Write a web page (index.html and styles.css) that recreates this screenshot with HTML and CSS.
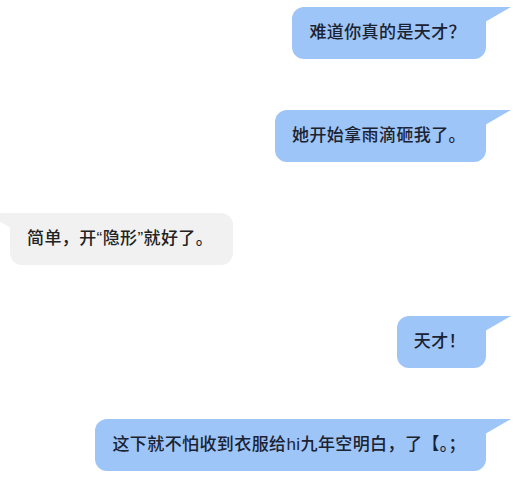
FILE: index.html
```html
<!DOCTYPE html>
<html lang="zh-CN">
<head>
<meta charset="utf-8">
<link rel="stylesheet" href="styles.css">
</head>
<body>
<div class="chat">
  <div class="row row-right"><div class="bubble bubble-blue">难道你真的是天才？</div></div>
  <div class="row row-right"><div class="bubble bubble-blue">她开始拿雨滴砸我了。</div></div>
  <div class="row row-left"><div class="bubble bubble-gray">简单，开“隐形”就好了。</div></div>
  <div class="row row-right"><div class="bubble bubble-blue">天才！</div></div>
  <div class="row row-right"><div class="bubble bubble-blue">这下就不怕收到衣服给hi九年空明白，了【。；</div></div>
</div>
</body>
</html>
```
FILE: styles.css
```css
html, body {
  margin: 0;
  padding: 0;
  background: #ffffff;
}
body {
  width: 520px;
  height: 479px;
  overflow: hidden;
  font-family: "Liberation Sans", "Noto Sans CJK SC", sans-serif;
}
.chat {
  display: flex;
  flex-direction: column;
  gap: 51px;
  padding-top: 7px;
}
.row {
  display: flex;
}
.row-right {
  justify-content: flex-end;
  padding-right: 34px;
}
.row-left {
  justify-content: flex-start;
  padding-left: 10px;
}
.bubble {
  position: relative;
  font-size: 17px;
  font-weight: 500;
  letter-spacing: 0.4px;
  line-height: 24px;
  padding: 14px 20px 14px 17px;
  border-radius: 12px;
  white-space: nowrap;
}
.bubble-blue {
  background: #9ec5f7;
  color: #1b2231;
  border-top-right-radius: 0;
}
.bubble-blue::after {
  content: "";
  position: absolute;
  top: 0;
  right: -25px;
  width: 26px;
  height: 15px;
  background: #9ec5f7;
  clip-path: polygon(0 0, 100% 0, 0 100%);
}
.bubble-gray {
  background: #f1f1f1;
  color: #222222;
  border-top-left-radius: 0;
}
.bubble-gray::before {
  content: "";
  position: absolute;
  top: 0;
  left: -25px;
  width: 26px;
  height: 15px;
  background: #f1f1f1;
  clip-path: polygon(0 0, 100% 0, 100% 100%);
}
```
